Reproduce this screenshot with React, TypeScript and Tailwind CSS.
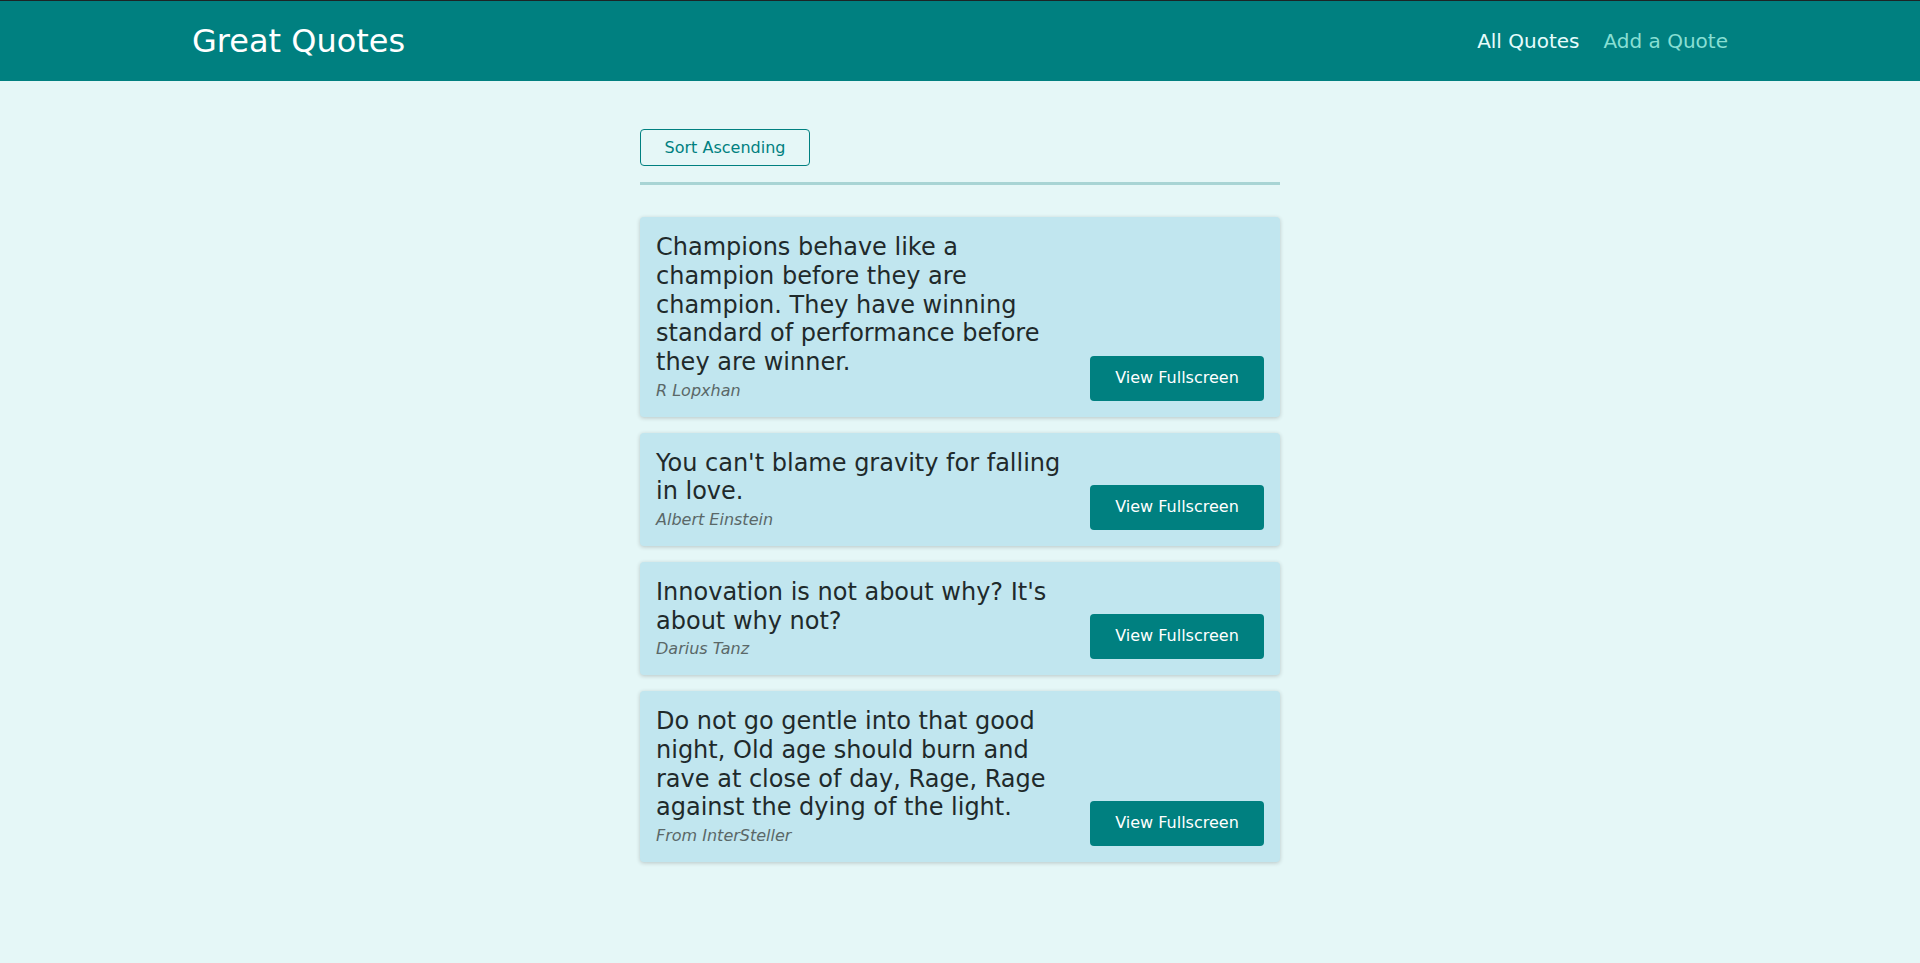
import React from "react";

const quotes = [
  {
    text: "Champions behave like a champion before they are champion. They have winning standard of performance before they are winner.",
    author: "R Lopxhan",
  },
  { text: "You can't blame gravity for falling in love.", author: "Albert Einstein" },
  { text: "Innovation is not about why? It's about why not?", author: "Darius Tanz" },
  {
    text: "Do not go gentle into that good night, Old age should burn and rave at close of day, Rage, Rage against the dying of the light.",
    author: "From InterSteller",
  },
];

export default function App() {
  return (
    <div
      className="min-h-[963px] bg-[#e5f7f7] border-t border-[#1c2526]"
      style={{ fontFamily: '"DejaVu Sans", sans-serif' }}
    >
      <header className="h-[80px] bg-[#008080] flex items-center justify-between px-[192px]">
        <div className="text-[32px] leading-none text-white">Great Quotes</div>
        <nav>
          <ul className="flex items-center gap-[24px] text-[20px] leading-none">
            <li className="text-[#e6fcfc]">All Quotes</li>
            <li className="text-[#88dfd3]">Add a Quote</li>
          </ul>
        </nav>
      </header>
      <main className="w-[640px] mx-auto mt-[48px]">
        <div className="pb-[16px] border-b-[3px] border-[#a8d4d4]">
          <button className="h-[37px] w-[170px] flex items-center justify-center border border-[#008080] rounded-[4px] text-[#008080] text-[16px] leading-none bg-transparent">
            Sort Ascending
          </button>
        </div>
        <ul className="mt-[32px] flex flex-col gap-[16px]">
          {quotes.map((q) => (
            <li
              key={q.author}
              className="flex items-end justify-between p-[16px] rounded-[4px] bg-[#c1e6ef] shadow-[0_1px_4px_rgba(0,0,0,0.2)]"
            >
              <figure className="w-[418px]">
                <blockquote className="text-[24px] leading-[1.2] text-[#1f2a2b] mb-[5px]">
                  <p>{q.text}</p>
                </blockquote>
                <figcaption className="text-[16px] leading-[18.6px] italic text-[#5a6868]">
                  {q.author}
                </figcaption>
              </figure>
              <a className="h-[45px] w-[174px] flex items-center justify-center rounded-[4px] bg-[#008080] text-white text-[16px] leading-none whitespace-nowrap">
                View Fullscreen
              </a>
            </li>
          ))}
        </ul>
      </main>
    </div>
  );
}
